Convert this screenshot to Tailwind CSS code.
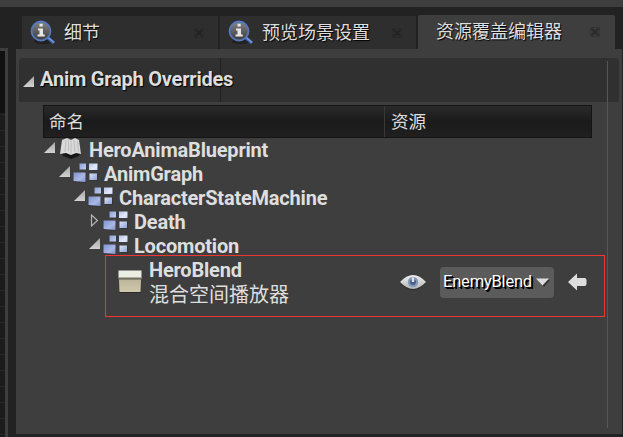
<!DOCTYPE html>
<html lang="zh">
<head>
<meta charset="utf-8">
<title>资源覆盖编辑器</title>
<script src="https://cdn.jsdelivr.net/npm/@tailwindcss/browser@4"></script>
</head>
<body class="w-[623px] h-[437px] overflow-hidden bg-[#222222] text-[#dedede] font-['Roboto','Noto_Sans_CJK_SC',sans-serif]">
<svg class="absolute w-0 h-0">
  <defs>
    <linearGradient id="blue" x1="0" y1="0" x2="1" y2="1"><stop stop-color="#7f92cb"/><stop offset=".6" stop-color="#a9b8e6"/><stop offset="1" stop-color="#8291c8"/></linearGradient>
    <linearGradient id="pale" x1="0" y1="0" x2="1" y2="1"><stop stop-color="#8aa0d8"/><stop offset=".55" stop-color="#e2eafc"/><stop offset="1" stop-color="#8b9fd4"/></linearGradient>
    <linearGradient id="tri" x1="0" y1="0" x2="0" y2="1"><stop stop-color="#a8a8a8"/><stop offset="1" stop-color="#d2d2d2"/></linearGradient>
    <linearGradient id="lens" x1="0" y1="0" x2="0" y2="1"><stop stop-color="#858585"/><stop offset="1" stop-color="#393939"/></linearGradient>
    <linearGradient id="eye" x1="0" y1="0" x2="0" y2="1"><stop stop-color="#f2f2f2"/><stop offset="1" stop-color="#b5b5b5"/></linearGradient>
    <linearGradient id="tan" x1="0" y1="0" x2="0" y2="1"><stop stop-color="#bdb69d"/><stop offset="1" stop-color="#d0c8ac"/></linearGradient>
    <symbol id="graph" viewBox="0 0 26 20">
      <path d="M6 1h8v6H6zM16 1h9v6h-9zM17 11h8v7h-8zM0 10l13-.5V20L0 19z" fill="#282b35" opacity=".45"/>
      <path d="M6.500 .5H13v6H6.500zM16 .5h8.500v6.500H16zM16.500 10.500H24v6.500h-7.500z" fill="url(#pale)"/>
      <path d="M.5 9.500h12V19L.5 18z" fill="url(#blue)"/>
    </symbol>
    <symbol id="open" viewBox="0 0 12 12"><path d="M11 0v11H0z" fill="url(#tri)"/></symbol>
    <symbol id="info" viewBox="0 0 26 26">
      <ellipse cx="13" cy="21.500" rx="9" ry="2.500" fill="#171717" opacity=".6"/>
      <path d="M17 17l7 6" stroke="#3f63ad" stroke-width="3.500"/><path d="M17 16.500l7 6" stroke="#7e9cde" stroke-width="1.300"/>
      <circle cx="11" cy="11" r="9.500" fill="url(#lens)" stroke="#5478bd" stroke-width="1.800"/>
      <path d="M9.500 3.800h3.200v2.800H9.500zM8 8.500h5v6h1.800v2H7.500v-2h2v-4H8z" fill="#e6e6e6"/>
    </symbol>
    <symbol id="close" viewBox="0 0 10 10"><rect x=".5" y=".5" width="9" height="9" fill="none" stroke="#1d1d1d" stroke-opacity=".3"/><path d="M1.500 1.500l7 7m0-7l-7 7" stroke="#1d1d1d" stroke-width="1.800" stroke-opacity=".6"/></symbol>
  </defs>
</svg>

<div class="relative flex flex-col w-full h-full">
  <div class="h-[7px] bg-[#3e3e3e] shrink-0"></div>

  <!-- tabs -->
  <div class="flex items-end h-[42px] pl-[22px] gap-[2px] shrink-0 text-[18px] leading-[33px] [text-shadow:1px_1px_1px_#000]">
    <div class="flex w-[196px] h-[33px] bg-[#2e2e2e]">
      <svg class="w-[26px] h-[26px] ml-[8px] mt-[4px]"><use href="#info"/></svg>
      <span class="ml-[8px] w-[130px]">细节</span>
      <svg class="w-[10px] h-[10px] mt-[12px]"><use href="#close"/></svg>
    </div>
    <div class="flex w-[196px] h-[33px] bg-[#2e2e2e]">
      <svg class="w-[26px] h-[26px] ml-[8px] mt-[4px]"><use href="#info"/></svg>
      <span class="ml-[8px] w-[130px]">预览场景设置</span>
      <svg class="w-[10px] h-[10px] mt-[12px]"><use href="#close"/></svg>
    </div>
    <div class="flex w-[197px] h-[34px] bg-[#3e3e3e] rounded-t-[2px]">
      <span class="ml-[18px] w-[154px]">资源覆盖编辑器</span>
      <svg class="w-[10px] h-[10px] mt-[12px]"><use href="#close"/></svg>
    </div>
  </div>

  <div class="flex h-[388px]">
    <!-- neighbouring graph edge -->
    <div class="w-[8px] -mt-px pt-[3px] pr-[3px] bg-[#3e3e3e]">
      <div class="h-full bg-[repeating-linear-gradient(#1c1c1c_0_15px,#282828_15px_16px)]"><div class="h-[62px] bg-[#111]"></div></div>
    </div>
    <div class="w-[8px]"></div>

    <!-- panel -->
    <div class="w-[606px] h-[385px] bg-[#3e3e3e] pt-[9px]">
      <div class="flex items-center mx-[3px] h-[44px] bg-[#303030] rounded-t-[4px]">
        <svg class="w-[12px] h-[12px] ml-[4px] mt-[3px]"><use href="#open"/></svg>
        <h1 class="relative z-10 ml-[5px] -mt-[3px] w-[180px] whitespace-nowrap text-[20px] tracking-[-0.22px] font-bold [text-shadow:1px_1px_1px_#000]">Anim Graph Overrides</h1>
        <div class="w-px h-full bg-[#202020]"></div>
      </div>

      <div class="flex mt-[3px] ml-[27px] w-[549px] h-[33px] border border-[#141414] bg-linear-to-b from-[#2b2b2b] via-[#1a1a1a] to-[#202020] text-[17.500px] leading-[32px]">
        <div class="w-[341px] h-[31px] pl-[5px] border-r border-[#383838]">命名</div>
        <div class="pl-[6px]">资源</div>
      </div>

      <!-- tree -->
      <div class="text-[20px] tracking-[-0.2px] font-bold leading-[25px] whitespace-nowrap">
        <div class="flex h-[24px] pl-[28px]">
          <svg class="w-[12px] h-[12px] mt-[4px]"><use href="#open"/></svg>
          <svg class="w-[25px] h-[24px] ml-[2px] -mt-px" viewBox="0 0 25 24">
            <path d="M3 14l10 3 10-3-2 5-8 3-8-3z" fill="#171717"/>
            <path d="M4 3l5-2 4 2 4-2 4 2 2 14-5-1-5 2-5-2-6 1z" fill="#d9d9d9"/>
            <path d="M8 3l-1 12M10.500 3v11M13 4v13M16 3l1 12M19.500 4l1 11" stroke="#bdbdbd" fill="none"/>
          </svg>
          <span class="ml-[6px]">HeroAnimaBlueprint</span>
        </div>
        <div class="flex h-[24px] pl-[43px]">
          <svg class="w-[12px] h-[12px] mt-[4px]"><use href="#open"/></svg>
          <svg class="w-[26px] h-[20px] ml-[2px] mt-px"><use href="#graph"/></svg>
          <span class="ml-[5px]">AnimGraph</span>
        </div>
        <div class="flex h-[24px] pl-[58px]">
          <svg class="w-[12px] h-[12px] mt-[4px]"><use href="#open"/></svg>
          <svg class="w-[26px] h-[20px] ml-[2px] mt-px"><use href="#graph"/></svg>
          <span class="ml-[5px]">CharacterStateMachine</span>
        </div>
        <div class="flex h-[24px] pl-[73px]">
          <svg class="w-[12px] h-[14px] mt-[4px]" viewBox="0 0 12 14"><path d="M2.500 1v11l6-5.500z" fill="none" stroke="#b5b5b5" stroke-width="1.200"/></svg>
          <svg class="w-[26px] h-[20px] ml-[2px] mt-px"><use href="#graph"/></svg>
          <span class="ml-[5px]">Death</span>
        </div>
        <div class="flex h-[24px] pl-[73px]">
          <svg class="w-[12px] h-[12px] mt-[4px]"><use href="#open"/></svg>
          <svg class="w-[26px] h-[20px] ml-[2px] mt-px"><use href="#graph"/></svg>
          <span class="ml-[5px]">Locomotion</span>
        </div>
      </div>

      <div class="flex -mt-[3px] ml-[89px] w-[500px] h-[62px] border border-[#f03535]">
        <svg class="w-[26px] h-[26px] ml-[11px] mt-[13px]" viewBox="0 0 26 26">
          <path d="M2 22h22v2H2z" fill="#292929"/>
          <path d="M1.500 1.500h23v8h-23z" fill="#eceee4"/><path d="M1.500 8.500h23v2h-23z" fill="#73705f"/>
          <path d="M2 10.500h22l-.5 12.500h-21z" fill="url(#tan)"/>
        </svg>
        <div class="ml-[6px] mt-[3px] w-[251px] whitespace-nowrap">
          <div class="text-[20px] tracking-[-0.2px] font-bold leading-[23px]">HeroBlend</div>
          <div class="text-[20px] leading-[23px] font-['Noto_Sans_CJK_SC',sans-serif]">混合空间播放器</div>
        </div>
        <svg class="w-[26px] h-[16px] mt-[18px]" viewBox="0 0 26 16">
          <path d="M0 9Q13-5 26 9 13 23 0 9z" fill="#2b2b2b"/>
          <path d="M0 8Q13-6 26 8 13 22 0 8z" fill="url(#eye)"/>
          <circle cx="13" cy="8" r="5.200" fill="#8299bb"/><circle cx="13" cy="8" r="3" fill="#4a5f85"/><path d="M11.800 3.500h2.400V8h-2.400z" fill="#dde4ee"/>
        </svg>
        <div class="flex ml-[14px] mt-[11px] w-[114px] h-[31px] rounded-[4px] bg-[#5b5b5b] text-white text-[16.500px] tracking-[-0.2px] leading-[29px] [text-shadow:1px_1px_0_#000,2px_2px_0_#000]">
          <span class="ml-[3px] w-[93px]">EnemyBlend</span>
          <svg class="w-[14px] h-[9px] mt-[11px]" viewBox="0 0 14 9"><path d="M2 2h12L8 9z" fill="#333"/><path d="M0 .5h13L6.500 7.500z" fill="#ddd"/></svg>
        </div>
        <svg class="w-[19px] h-[19px] ml-[14px] mt-[17px]" viewBox="0 0 19 19"><path d="M0 9l9-8.500V5h7.500q2 0 2 2v4q0 2-2 2H9v4.500z" fill="#dedede"/></svg>
      </div>
    </div>
  </div>
  <!-- scrollbar track lies over the panel content -->
  <div class="absolute left-[607px] top-[61px] w-px h-[367px] bg-[#565656]"></div>
</div>
</body>
</html>
